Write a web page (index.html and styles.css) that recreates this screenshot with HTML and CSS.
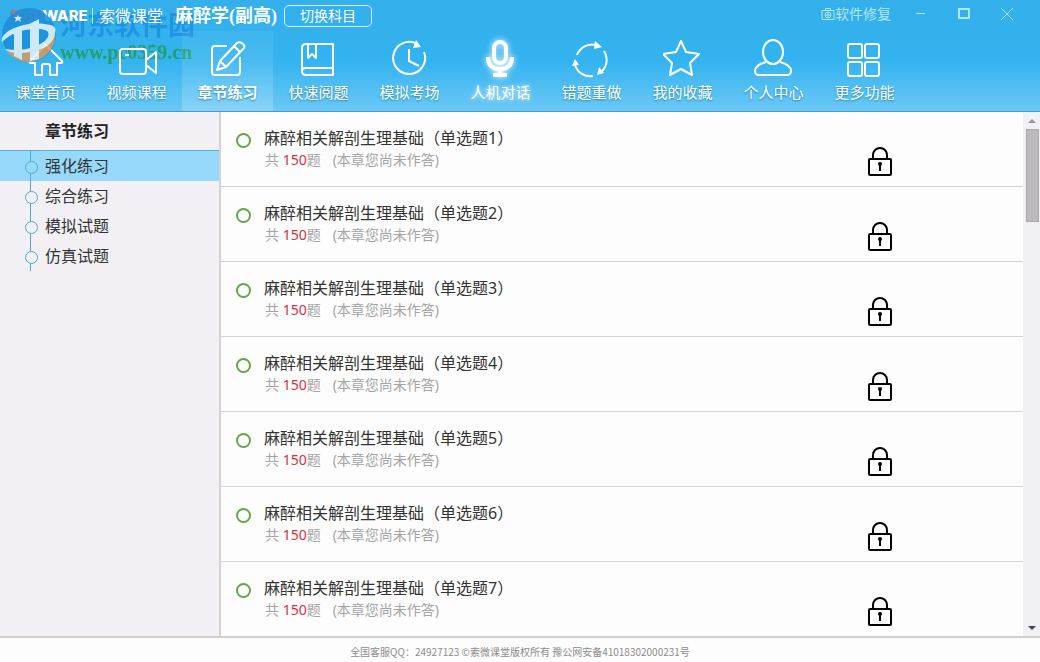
FILE: index.html
```html
<!DOCTYPE html>
<html lang="zh-CN">
<head>
<meta charset="utf-8">
<title>索微课堂</title>
<link rel="stylesheet" href="styles.css">
</head>
<body>
<header class="header">
	<div class="titlebar">
		<div class="brand"><span class="brand-red">SOU</span>WARE</div>
		<div class="brand-cn">索微课堂</div>
		<h1 class="subject">麻醉学(副高)</h1>
		<button class="switch" type="button">切换科目</button>
		<button class="repair" type="button">
			<svg width="14" height="14" viewBox="0 0 14 14"><path d="M1 3.500h12v9H1zM4.500 3.500v-2h5v2M7 6v4M5 8h4"/><circle cx="7" cy="8" r="3"/></svg>软件修复</button>
		<div class="win">
			<button type="button" aria-label="最小化"><svg width="14" height="14" viewBox="0 0 14 14"><path d="M2 6.500h9"/></svg></button>
			<button type="button" aria-label="最大化"><svg width="14" height="14" viewBox="0 0 14 14"><path class="thick" d="M2 2h10v9h-10z"/></svg></button>
			<button type="button" aria-label="关闭"><svg width="14" height="14" viewBox="0 0 14 14"><path d="M1 1l12 12M13 1l-12 12"/></svg></button>
		</div>
	</div>
	<nav class="nav">
		<a href="#"><svg viewBox="0 0 40 40"><path d="M4 23L20 7l16 16q1 2-1 2h-4v12h-7v-9q0-2-2-2h-4q-2 0-2 2v9H9V25H5q-2 0-1-2z"/></svg>课堂首页</a>
		<a href="#"><svg viewBox="0 0 40 40"><rect x="3" y="11" width="26" height="25" rx="3"/><path d="M29 22l10-8v21l-10-8M8 17h4"/></svg>视频课程</a>
		<a href="#" class="on"><svg viewBox="0 0 40 40"><path d="M19 8H7q-3 0-3 3v23q0 3 3 3h22q3 0 3-3V19"/><path d="M9 32l3-9L29 5q3-2 6 1t0 5L18 29zM12 23l6 6M26 8l6 6"/></svg>章节练习</a>
		<a href="#"><svg viewBox="0 0 40 40"><path d="M7 6h27v31H7q-4 0-4-4V10q0-4 4-4zM3 33q0-3 4-3h27M9 6v14l4-4 4 4V6"/></svg>快速阅题</a>
		<a href="#"><svg viewBox="0 0 40 40"><path d="M27 6A16 16 0 1 0 34 14M19 11v12l10 5"/><path class="fill" d="M26 2l5 7-8 1z"/></svg>模拟考场</a>
		<a href="#" class="glow"><svg viewBox="0 0 40 40"><rect x="13" y="4" width="12" height="21" rx="6"/><path d="M7 19q0 12 12 12t12-12M19 31v5M12 37h14"/></svg>人机对话</a>
		<a href="#"><svg viewBox="0 0 40 40"><path d="M5 17A16 16 0 0 1 24 7M32 13A16 16 0 0 1 29 34M21 38A16 16 0 0 1 3 27"/><path class="fill" d="M23 3l7 6-8 2zM25 37l2-8 5 6zM0 28l3-7 4 6z"/></svg>错题重做</a>
		<a href="#"><svg viewBox="0 0 40 40"><path d="M18 3l5 11 13 2-9 9 2 12-11-6-11 6 2-12-9-9 13-2z"/></svg>我的收藏</a>
		<a href="#"><svg viewBox="0 0 40 40"><ellipse cx="19" cy="14" rx="10" ry="12"/><path d="M12 24q-11 3-11 9 0 4 4 4h28q4 0 4-4 0-6-11-9"/></svg>个人中心</a>
		<a href="#"><svg viewBox="0 0 40 40"><rect x="3" y="6" width="14" height="14" rx="2"/><rect x="20" y="6" width="14" height="14" rx="2"/><rect x="3" y="24" width="14" height="14" rx="2"/><rect x="20" y="24" width="14" height="14" rx="2"/></svg>更多功能</a>
	</nav>
	<div class="mark">
		<svg width="56" height="56" viewBox="0 0 56 56">
			<circle cx="28" cy="28" r="27" fill="#178fdb"/>
			<path d="M5 43Q40 45 54 24A27 27 0 0 1 5 43z" fill="#d99a58"/>
			<path d="M1 35C-2 24 26 12 50 18Q56 20 54 26Q53 40 30 45Q10 48 4 42Q28 46 44 34Q54 22 36 22Q14 22 1 35z" fill="#e9f3f9"/>
			<path d="M11 25l10-6v34l-8-4V28zM28 17l10-5v40l-9 2V23z" fill="#e9f3f9"/>
			<path d="M17 8l1 2h3l-2 2 1 3-3-2-3 2 1-3-2-2h3z" fill="#e9f3f9"/>
		</svg>
		<div class="mark-text">
			<div class="mark-cn">河东软件园</div>
			<div class="mark-url">www.pc0359.cn</div>
		</div>
	</div>
</header>
<div class="main">
	<aside class="side">
		<h2>章节练习</h2>
		<ul>
			<li class="on"><a href="#">强化练习</a></li>
			<li><a href="#">综合练习</a></li>
			<li><a href="#">模拟试题</a></li>
			<li><a href="#">仿真试题</a></li>
		</ul>
	</aside>
	<ul class="list" id="list"></ul>
	<div class="scroll">
		<i class="up"></i>
		<div class="thumb"></div>
		<i class="down"></i>
	</div>
</div>
<footer class="footer">全国客服QQ：24927123 ©索微课堂版权所有 豫公网安备41018302000231号</footer>
<script src="list.js"></script>
</body>
</html>
```
FILE: styles.css
```css
*{ margin:0; padding:0; box-sizing:border-box; list-style:none;}
body{ height:100vh; display:flex; flex-direction:column; overflow:hidden; background:#fdfdfd; color:#333; font-family:"Noto Sans","Noto Sans CJK SC",sans-serif;}
a{ color:inherit; text-decoration:none;}
button{ border:0; background:none; color:inherit; font:inherit; cursor:pointer;}
svg{ fill:none; stroke:currentColor;}

.header{ position:relative; z-index:0; height:112px; flex:none; color:#fff; background:linear-gradient(#33b0ec,#33b3ef 55%,#6cc8f6); border-bottom:1px solid #3c9fd3;}
.titlebar{ display:flex; align-items:center; height:31px; padding-left:10px; white-space:nowrap;}
.brand{ width:83px; border-right:1px solid #b5e3fa; font:800 15px/16px Inter,sans-serif;}
.brand-red{ color:#c86a7c;}
.brand-cn{ width:77px; padding-left:6px; font-size:16px; line-height:24px;}
.subject{ width:114px; padding-left:5px; font:bold 18px/24px "Liberation Serif","Noto Sans CJK SC",serif;}
.switch{ width:88px; height:22px; border:1px solid #d4f3ff; border-radius:5px; font-size:14px; line-height:18px;}
.repair{ display:flex; align-items:center; margin-left:auto; padding-bottom:4px; color:#b3e5fb; font-size:14px; line-height:24px;}
.win{ display:flex; gap:29px; margin:0 26px 0 23px; padding-bottom:4px; color:#b3e5fb;}
.win button{ display:flex;}
.thick{ stroke-width:2;}

.nav{ display:flex; height:80px;}
.nav a{ width:91px; padding-top:7px; display:flex; flex-direction:column; align-items:center; font-size:15px; line-height:24px; text-shadow:0 1px 2px #2484b4;}
.nav svg{ width:40px; height:40px; margin-bottom:2px; stroke-width:2; stroke-linejoin:round;}
.nav .fill{ fill:#fff; stroke:none;}
.nav .on{ background:linear-gradient(rgba(255,255,255,.05),rgba(255,255,255,.2)); font-weight:bold;}
.nav .glow{ text-shadow:0 0 5px #fff;}
.nav .glow svg{ stroke-width:4; filter:drop-shadow(0 0 3px #fff);}

.mark{ position:absolute; left:1px; top:7px; display:flex; gap:3px; pointer-events:none;}
.mark svg{ stroke:none; opacity:.85;}
.mark-text{ position:relative; z-index:-1; opacity:.85;}
.mark-cn{ color:#1f8fe0; font-size:27px; font-weight:bold; line-height:36px;}
.mark-url{ color:#1f9d55; font:bold 20px/18px "Liberation Serif",serif;}

.main{ display:flex; flex:1; min-height:0; border-bottom:2px solid #d0d0d0;}
.side{ width:221px; flex:none; background:#f2f0f5; border-right:2px solid #d2d2d6;}
.side h2{ height:39px; padding-left:45px; border-bottom:1px solid #56b2dc; color:#222; font-size:16px; line-height:38px;}
.side li{ position:relative; height:30px; padding-left:45px; font-size:16px; line-height:30px;}
.side li:before{ content:""; position:absolute; left:30px; top:0; width:1px; height:30px; background:#4faad0;}
.side li:after{ content:""; position:absolute; left:25px; top:10px; width:11px; height:11px; border:1px solid #4faad0; border-radius:50%; background:#f2f0f5;}
.side .on, .side .on:after{ background:#96d9fa;}

.list{ flex:1; overflow:hidden;}
.list li{ display:flex; height:75px; padding:14px 130px 0 15px; border-bottom:1px solid #d3d3d6;}
.dot{ width:15px; height:15px; margin:7px 13px 0 0; border:2px solid #64a744; border-radius:50%;}
.info{ flex:1;}
.info a{ display:block; font-size:16px; line-height:24px;}
.info p{ padding-left:1px; color:#a5a5a5; font-size:14px; line-height:20px;}
.info em{ color:#d6303e; font-style:normal;}
.info span{ margin-left:12px;}
.lock{ width:26px; height:30px; margin-top:20px; color:#000; stroke-width:2;}

.scroll{ width:17px; flex:none; padding:0 1px 6px 2px; display:flex; flex-direction:column; align-items:center; background:#f1f0f4;}
.up, .down{ border:4px solid transparent;}
.up{ margin-top:3px; border-bottom-color:#96969a;}
.down{ margin-top:auto; border-top-color:#444; border-bottom:0;}
.thumb{ width:13px; height:93px; margin-top:6px; background:#bdbabf; border:1px solid #aaa8ad;}
.footer{ height:24px; flex:none; padding-top:4px; color:#8c8c8c; font:10px/20px "Noto Sans CJK SC",sans-serif; text-align:center;}
```
FILE: list.js
```javascript
var oList=document.getElementById('list');
var str='';
for(var i=1; i<=7; i++){
	str+='<li><i class="dot"></i><div class="info"><a href="#">麻醉相关解剖生理基础（单选题'+i+'）</a>'+
		'<p>共 <em>150</em>题<span>(本章您尚未作答)</span></p></div>'+
		'<svg class="lock" viewBox="0 0 26 30"><rect x="2" y="13" width="22" height="16" rx="1"/><path d="M6 13V9a7 7 0 0 1 14 0v4M13 18v7"/><circle cx="13" cy="18" r="1"/></svg></li>';
}
oList.innerHTML=str;
```
